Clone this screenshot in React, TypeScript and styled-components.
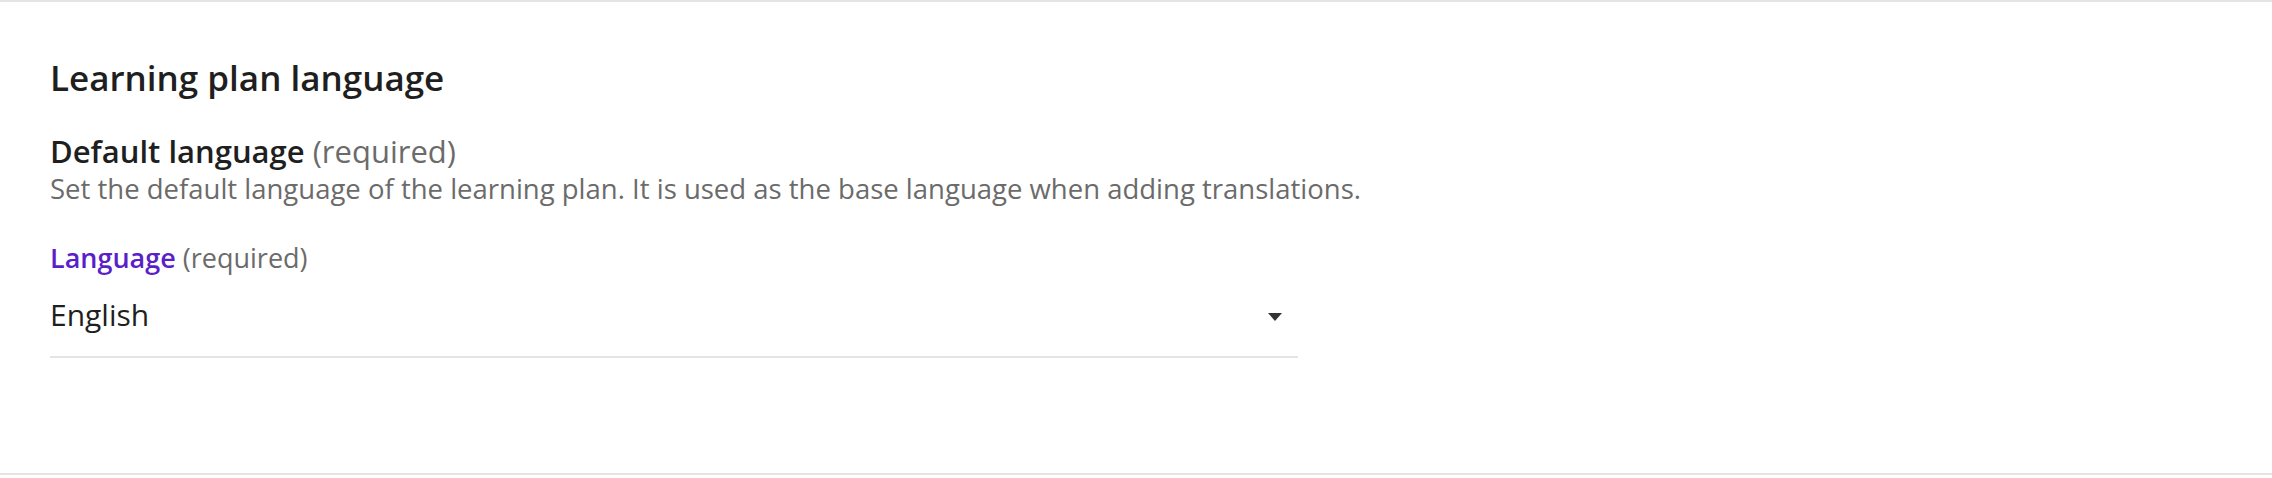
import styled, { createGlobalStyle } from 'styled-components';

const GlobalStyle = createGlobalStyle`
  body {
    margin: 0;
    background: #ffffff;
    font-family: 'Open Sans', 'Noto Sans', sans-serif;
  }
`;

const Section = styled.section`
  box-sizing: border-box;
  height: 475px;
  border-top: 2px solid #e4e4e4;
  border-bottom: 2px solid #e4e4e4;
  padding: 58px 50px 0 50px;
`;

const Title = styled.h2`
  margin: 0;
  font-size: 35px;
  line-height: 36px;
  font-weight: 600;
  color: #1f1f1f;
`;

const FieldHeading = styled.h3`
  margin: 39px 0 0 0;
  font-size: 31px;
  line-height: 32px;
  font-weight: 600;
  color: #1f1f1f;
`;

const Required = styled.span`
  font-weight: 400;
  color: #6b6b6b;
`;

const Description = styled.p`
  margin: 8px 0 0 0;
  font-size: 27.5px;
  line-height: 28px;
  color: #6b6b6b;
`;

const SelectField = styled.div`
  width: 1248px;
  margin-top: 41px;
`;

const Label = styled.label`
  display: block;
  font-size: 27px;
  line-height: 28px;
  font-weight: 600;
  color: #5b1fc9;
`;

const SelectBox = styled.div`
  display: flex;
  align-items: center;
  justify-content: space-between;
  height: 84px;
  padding-right: 16px;
  border-bottom: 2px solid #e4e4e4;
  font-size: 30px;
  color: #1f1f1f;
`;

const Caret = styled.span`
  width: 0;
  height: 0;
  margin-top: 5px;
  border-left: 7px solid transparent;
  border-right: 7px solid transparent;
  border-top: 8px solid #333333;
`;

export default function App() {
  return (
    <>
      <GlobalStyle />
      <Section>
        <Title>Learning plan language</Title>
        <FieldHeading>
          Default language <Required>(required)</Required>
        </FieldHeading>
        <Description>
          Set the default language of the learning plan. It is used as the base language when adding translations.
        </Description>
        <SelectField>
          <Label>
            Language <Required>(required)</Required>
          </Label>
          <SelectBox>
            <span>English</span>
            <Caret />
          </SelectBox>
        </SelectField>
      </Section>
    </>
  );
}
